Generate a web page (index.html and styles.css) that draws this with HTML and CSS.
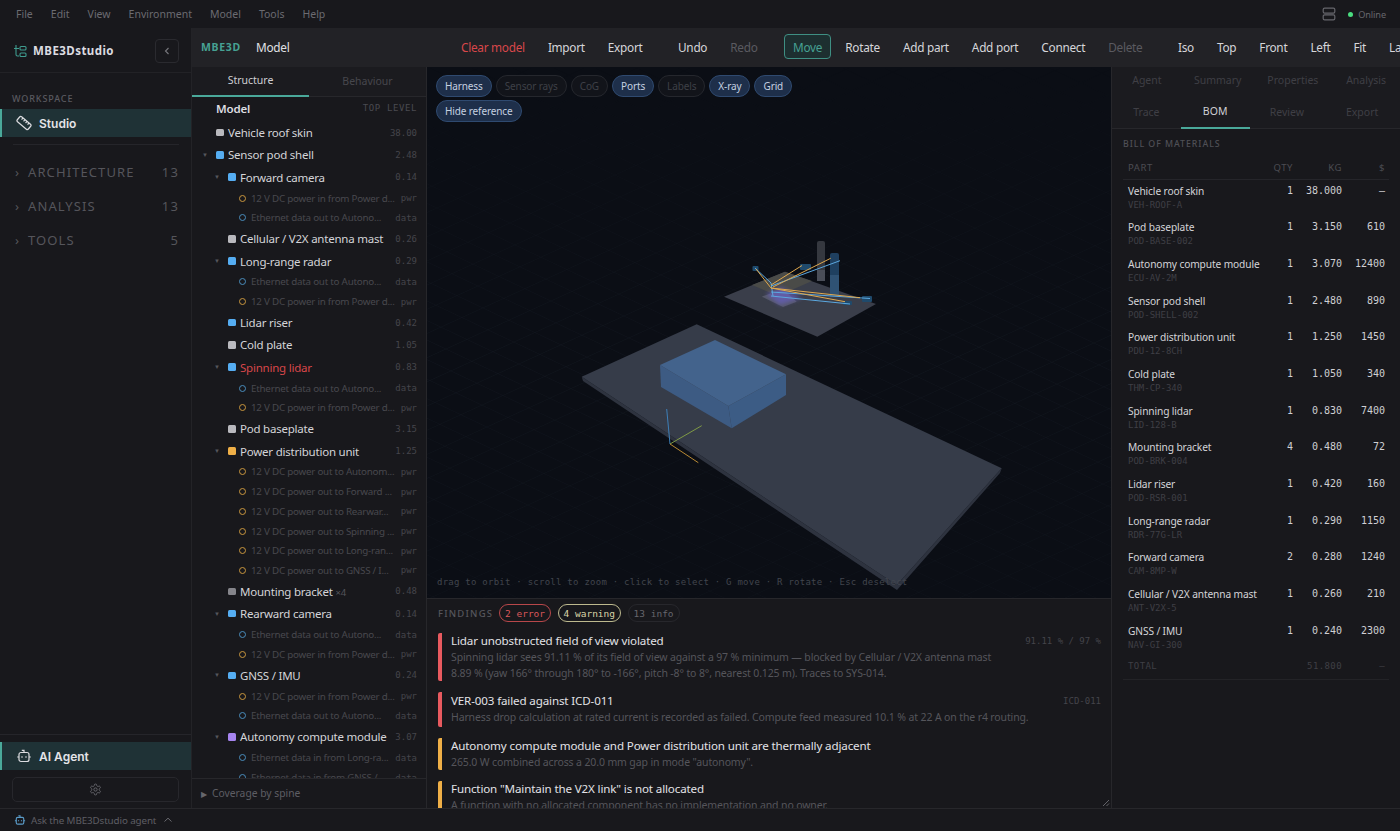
FILE: index.html
```html
<!DOCTYPE html>
<html lang="en">
<head>
<meta charset="utf-8">
<title>MBE3Dstudio</title>
<link rel="stylesheet" href="styles.css">
</head>
<body>
<div class="app">
  <header class="menubar">
    <nav class="menus"><span>File</span><span>Edit</span><span>View</span><span>Environment</span><span>Model</span><span>Tools</span><span>Help</span></nav>
    <svg class="server" viewBox="0 0 14 14" width="14" height="14"><rect x="1.2" y="1.2" width="11.6" height="5" rx="1.4"/><rect x="1.2" y="7.8" width="11.6" height="5" rx="1.4"/></svg>
    <span class="online"><i></i>Online</span>
  </header>
  <div class="body">
    <aside class="sidebar">
      <div class="brand">
        <svg class="logo" viewBox="0 0 14 14" width="14" height="14"><path d="M3 1v9.5q0 1.5 1.5 1.5H6M3 4.5h3"/><rect x="7" y="2.5" width="6" height="3.5" rx="1"/><rect x="7" y="9" width="6" height="3.5" rx="1"/><path d="M1 4.5h2"/></svg>
        <strong>MBE3Dstudio</strong>
        <button class="collapse"><svg viewBox="0 0 10 10" width="10" height="10"><path d="M6.5 2 3.5 5l3 3"/></svg></button>
      </div>
      <div class="ws-label">WORKSPACE</div>
      <div class="nav-active">
        <svg viewBox="0 0 16 16" width="16" height="16"><g transform="rotate(40 8 8)"><rect x="0.8" y="4.8" width="14.4" height="6.4" rx="1.4"/><path d="M4 4.8v2.2M6.6 4.8v2.2M9.2 4.8v2.2M11.8 4.8v2.2"/></g></svg>
        <span>Studio</span>
      </div>
      <div class="side-rule"></div>
      <div class="nav-group"><span class="chev">›</span><span class="g-name">ARCHITECTURE</span><span class="g-num">13</span></div>
      <div class="nav-group"><span class="chev">›</span><span class="g-name">ANALYSIS</span><span class="g-num">13</span></div>
      <div class="nav-group"><span class="chev">›</span><span class="g-name">TOOLS</span><span class="g-num">5</span></div>
      <div class="side-bottom">
        <div class="nav-active">
          <svg viewBox="0 0 16 16" width="16" height="16"><path d="M8 4.5V2.4H5.8"/><rect x="3" y="4.5" width="10" height="9" rx="2"/><path d="M1.2 9h1.8M13 9h1.8M6 8.2v1.6M10 8.2v1.6"/></svg>
          <span>AI Agent</span>
        </div>
        <button class="settings"><svg viewBox="0 0 24 24" width="13" height="13"><path d="M12.2 2h-.4a2 2 0 0 0-2 2v.2a2 2 0 0 1-1 1.7l-.4.3a2 2 0 0 1-2 0l-.2-.1a2 2 0 0 0-2.7.7l-.2.4a2 2 0 0 0 .7 2.7l.2.1a2 2 0 0 1 1 1.7v.5a2 2 0 0 1-1 1.8l-.2.1a2 2 0 0 0-.7 2.7l.2.4a2 2 0 0 0 2.7.7l.2-.1a2 2 0 0 1 2 0l.4.3a2 2 0 0 1 1 1.7v.2a2 2 0 0 0 2 2h.4a2 2 0 0 0 2-2v-.2a2 2 0 0 1 1-1.7l.4-.3a2 2 0 0 1 2 0l.2.1a2 2 0 0 0 2.7-.7l.2-.4a2 2 0 0 0-.7-2.7l-.2-.1a2 2 0 0 1-1-1.8v-.5a2 2 0 0 1 1-1.7l.2-.1a2 2 0 0 0 .7-2.7l-.2-.4a2 2 0 0 0-2.7-.7l-.2.1a2 2 0 0 1-2 0l-.4-.3a2 2 0 0 1-1-1.7V4a2 2 0 0 0-2-2z"/><circle cx="12" cy="12" r="3"/></svg></button>
      </div>
    </aside>
    <main class="workspace">
      <div class="toolbar">
        <span class="tb-brand">MBE3D</span>
        <span class="tb-title">Model</span>
        <div class="tb-group first">
          <button class="tb danger">Clear model</button><button class="tb">Import</button><button class="tb">Export</button>
        </div>
        <div class="tb-group">
          <button class="tb">Undo</button><button class="tb off">Redo</button>
        </div>
        <div class="tb-group">
          <button class="tb on">Move</button><button class="tb">Rotate</button><button class="tb">Add part</button><button class="tb">Add port</button><button class="tb">Connect</button><button class="tb off">Delete</button>
        </div>
        <div class="tb-group">
          <button class="tb">Iso</button><button class="tb">Top</button><button class="tb">Front</button><button class="tb">Left</button><button class="tb">Fit</button><button class="tb">Layout</button>
        </div>
      </div>
      <div class="panes">
        <section class="tree-pane">
          <div class="tree-tabs"><span class="active">Structure</span><span>Behaviour</span></div>
          <div class="tree">
            <div class="tree-head"><b>Model</b><em>TOP LEVEL</em></div>
            <div class="row l0"><i class="sq gray"></i><span class="nm">Vehicle roof skin</span><em>38.00</em></div>
            <div class="row l0 open"><i class="sq blue"></i><span class="nm">Sensor pod shell</span><em>2.48</em></div>
            <div class="row l1 open"><i class="sq blue"></i><span class="nm">Forward camera</span><em>0.14</em></div>
            <div class="port"><i class="ring pw"></i><span class="pn">12 V DC power in from Power d...</span><em>pwr</em></div>
            <div class="port"><i class="ring dt"></i><span class="pn">Ethernet data out to Autono...</span><em>data</em></div>
            <div class="row l1"><i class="sq gray"></i><span class="nm">Cellular / V2X antenna mast</span><em>0.26</em></div>
            <div class="row l1 open"><i class="sq blue"></i><span class="nm">Long-range radar</span><em>0.29</em></div>
            <div class="port"><i class="ring dt"></i><span class="pn">Ethernet data out to Autono...</span><em>data</em></div>
            <div class="port"><i class="ring pw"></i><span class="pn">12 V DC power in from Power d...</span><em>pwr</em></div>
            <div class="row l1"><i class="sq blue"></i><span class="nm">Lidar riser</span><em>0.42</em></div>
            <div class="row l1"><i class="sq gray"></i><span class="nm">Cold plate</span><em>1.05</em></div>
            <div class="row l1 open"><i class="sq blue"></i><span class="nm err">Spinning lidar</span><em>0.83</em></div>
            <div class="port"><i class="ring dt"></i><span class="pn">Ethernet data out to Autono...</span><em>data</em></div>
            <div class="port"><i class="ring pw"></i><span class="pn">12 V DC power in from Power d...</span><em>pwr</em></div>
            <div class="row l1"><i class="sq gray"></i><span class="nm">Pod baseplate</span><em>3.15</em></div>
            <div class="row l1 open"><i class="sq amber"></i><span class="nm">Power distribution unit</span><em>1.25</em></div>
            <div class="port"><i class="ring pw"></i><span class="pn">12 V DC power out to Autonom...</span><em>pwr</em></div>
            <div class="port"><i class="ring pw"></i><span class="pn">12 V DC power out to Forward ...</span><em>pwr</em></div>
            <div class="port"><i class="ring pw"></i><span class="pn">12 V DC power out to Rearwar...</span><em>pwr</em></div>
            <div class="port"><i class="ring pw"></i><span class="pn">12 V DC power out to Spinning ...</span><em>pwr</em></div>
            <div class="port"><i class="ring pw"></i><span class="pn">12 V DC power out to Long-ran...</span><em>pwr</em></div>
            <div class="port"><i class="ring pw"></i><span class="pn">12 V DC power out to GNSS / I...</span><em>pwr</em></div>
            <div class="row l1"><i class="sq dim"></i><span class="nm">Mounting bracket <small>×4</small></span><em>0.48</em></div>
            <div class="row l1 open"><i class="sq blue"></i><span class="nm">Rearward camera</span><em>0.14</em></div>
            <div class="port"><i class="ring dt"></i><span class="pn">Ethernet data out to Autono...</span><em>data</em></div>
            <div class="port"><i class="ring pw"></i><span class="pn">12 V DC power in from Power d...</span><em>pwr</em></div>
            <div class="row l1 open"><i class="sq blue"></i><span class="nm">GNSS / IMU</span><em>0.24</em></div>
            <div class="port"><i class="ring pw"></i><span class="pn">12 V DC power in from Power d...</span><em>pwr</em></div>
            <div class="port"><i class="ring dt"></i><span class="pn">Ethernet data out to Autono...</span><em>data</em></div>
            <div class="row l1 open"><i class="sq purple"></i><span class="nm">Autonomy compute module</span><em>3.07</em></div>
            <div class="port"><i class="ring dt"></i><span class="pn">Ethernet data in from Long-ra...</span><em>data</em></div>
            <div class="port"><i class="ring dt"></i><span class="pn">Ethernet data in from GNSS /...</span><em>data</em></div>
          </div>
          <div class="coverage"><span class="tri">▶</span>Coverage by spine</div>
        </section>
        <section class="center">
          <div class="viewport">
            <svg class="scene" viewBox="427 67 684 531" width="684" height="531">
              <defs>
                <pattern id="gridlines" width="1" height="1" patternUnits="userSpaceOnUse" patternTransform="matrix(21 -9.6 26 12.3 427 67)">
                  <path d="M0 0H1M0 0V1" class="gridpath"/>
                </pattern>
                <linearGradient id="gridfade" x1="0" y1="0" x2="0" y2="1">
                  <stop offset="0" stop-color="#fff" stop-opacity="0"/>
                  <stop offset=".18" stop-color="#fff" stop-opacity=".45"/>
                  <stop offset=".55" stop-color="#fff" stop-opacity="1"/>
                  <stop offset="1" stop-color="#fff" stop-opacity=".6"/>
                </linearGradient>
                <mask id="gridmask"><rect x="427" y="67" width="684" height="531" fill="url(#gridfade)"/></mask>
                <filter id="soft" x="-30%" y="-30%" width="160%" height="160%"><feGaussianBlur stdDeviation="2"/></filter>
              </defs>
              <rect x="427" y="67" width="684" height="531" fill="url(#gridlines)" mask="url(#gridmask)"/>
              <polygon class="slab-side" points="581.7,376.7 583,381 897,590 1000,473 1001.7,468.3 896.7,585"/>
              <polygon class="slab-top" points="581.7,376.7 696.7,324.3 1001.7,468.3 896.7,585"/>
              <polygon class="box-left" points="660,365 728.3,406 731.7,428.3 661,387"/>
              <polygon class="box-right" points="728.3,406 786,374.3 786,395 731.7,428.3"/>
              <polygon class="box-top" points="660,365 715,340 786,374.3 728.3,406"/>
              <g class="axes">
                <line x1="670" y1="444" x2="666.7" y2="409" stroke="#3d7fb8"/>
                <line x1="670" y1="444" x2="701.7" y2="425.7" stroke="#7f9a45"/>
                <line x1="670" y1="444" x2="698.3" y2="462.7" stroke="#b98a34"/>
              </g>
              <rect class="riser" x="817" y="241" width="8" height="40" rx="2"/>
              <rect class="blue-col" x="830" y="253" width="9" height="40" rx="2"/>
              <polygon class="pod-plate" points="724,296.7 785,271.7 876,304 817.3,336.7"/>
              <rect class="riser-over" x="817" y="270" width="8" height="11"/>
              <rect class="blue-over" x="830" y="275" width="9" height="22"/>
              <polygon class="pod-tan" points="752,285 785,271.8 812,281 778,296"/>
              <polygon class="pod-sub" points="761.7,296.7 783,289 796.7,301.7 783,307"/>
              <polygon class="glow" points="766,294 781,287 802,298 780,305" filter="url(#soft)"/>
              <g class="nodes">
                <rect x="752.5" y="266" width="6" height="5" rx="1"/>
                <rect x="800" y="264" width="11" height="6" rx="1"/>
                <rect x="862" y="296" width="10" height="6" rx="1"/>
                <rect x="843" y="301" width="9" height="4" rx="1"/>
              </g>
              <g class="wires-blue">
                <line x1="771" y1="283" x2="755" y2="268"/>
                <line x1="771" y1="286" x2="840" y2="260.7"/>
                <line x1="771" y1="292" x2="870" y2="298.5"/>
                <line x1="771" y1="296" x2="850" y2="304"/>
                <line x1="771" y1="283" x2="773" y2="296"/>
              </g>
              <g class="wires-amber">
                <line x1="771" y1="288" x2="756" y2="269"/>
                <line x1="771" y1="285" x2="802" y2="265.5"/>
                <line x1="773" y1="287" x2="830.7" y2="258.3"/>
                <line x1="771" y1="288" x2="860" y2="297.7"/>
                <line x1="771" y1="288" x2="845" y2="301.7"/>
              </g>
            </svg>
            <div class="chips">
              <span class="chip on">Harness</span><span class="chip">Sensor rays</span><span class="chip">CoG</span><span class="chip on">Ports</span><span class="chip">Labels</span><span class="chip on">X-ray</span><span class="chip on">Grid</span><span class="chip on">Hide reference</span>
            </div>
            <div class="hint">drag to orbit · scroll to zoom · click to select · G move · R rotate · Esc deselect</div>
          </div>
          <div class="findings">
            <div class="f-head">
              <span class="f-label">FINDINGS</span>
              <span class="badge b-err">2 error</span><span class="badge b-warn">4 warning</span><span class="badge b-info">13 info</span>
            </div>
            <article class="f f-e">
              <div class="f-text"><h4>Lidar unobstructed field of view violated</h4><p>Spinning lidar sees 91.11 % of its field of view against a 97 % minimum — blocked by Cellular / V2X antenna mast<br>8.89 % (yaw 166° through 180° to -166°, pitch -8° to 8°, nearest 0.125 m). Traces to SYS-014.</p></div>
              <code>91.11 % / 97 %</code>
            </article>
            <article class="f f-e f-tall">
              <div class="f-text"><h4>VER-003 failed against ICD-011</h4><p>Harness drop calculation at rated current is recorded as failed. Compute feed measured 10.1 % at 22 A on the r4 routing.</p></div>
              <code>ICD-011</code>
            </article>
            <article class="f f-w">
              <div class="f-text"><h4>Autonomy compute module and Power distribution unit are thermally adjacent</h4><p>265.0 W combined across a 20.0 mm gap in mode "autonomy".</p></div>
            </article>
            <article class="f f-w">
              <div class="f-text"><h4>Function "Maintain the V2X link" is not allocated</h4><p>A function with no allocated component has no implementation and no owner.</p></div>
            </article>
            <svg class="grip" viewBox="0 0 8 8" width="8" height="8"><path d="M1 7 7 1M4.5 7 7 4.5"/></svg>
          </div>
        </section>
        <section class="right-pane">
          <div class="r-tabs">
            <div class="r-row"><span class="w70">Agent</span><span class="w72">Summary</span><span class="w79">Properties</span><span class="w68">Analysis</span></div>
            <div class="r-row r-second"><span class="w69">Trace</span><span class="w69 active">BOM</span><span class="w75">Review</span><span class="w76">Export</span></div>
          </div>
          <div class="bom">
            <div class="bom-title">BILL OF MATERIALS</div>
            <div class="b-head"><span>PART</span><span>QTY</span><span>KG</span><span>$</span></div>
            <div class="b-row"><div><b>Vehicle roof skin</b><u>VEH-ROOF-A</u></div><span>1</span><span>38.000</span><span>—</span></div>
            <div class="b-row"><div><b>Pod baseplate</b><u>POD-BASE-002</u></div><span>1</span><span>3.150</span><span>610</span></div>
            <div class="b-row"><div><b>Autonomy compute module</b><u>ECU-AV-2M</u></div><span>1</span><span>3.070</span><span>12400</span></div>
            <div class="b-row"><div><b>Sensor pod shell</b><u>POD-SHELL-002</u></div><span>1</span><span>2.480</span><span>890</span></div>
            <div class="b-row"><div><b>Power distribution unit</b><u>PDU-12-8CH</u></div><span>1</span><span>1.250</span><span>1450</span></div>
            <div class="b-row"><div><b>Cold plate</b><u>THM-CP-340</u></div><span>1</span><span>1.050</span><span>340</span></div>
            <div class="b-row"><div><b>Spinning lidar</b><u>LID-128-B</u></div><span>1</span><span>0.830</span><span>7400</span></div>
            <div class="b-row"><div><b>Mounting bracket</b><u>POD-BRK-004</u></div><span>4</span><span>0.480</span><span>72</span></div>
            <div class="b-row"><div><b>Lidar riser</b><u>POD-RSR-001</u></div><span>1</span><span>0.420</span><span>160</span></div>
            <div class="b-row"><div><b>Long-range radar</b><u>RDR-77G-LR</u></div><span>1</span><span>0.290</span><span>1150</span></div>
            <div class="b-row"><div><b>Forward camera</b><u>CAM-8MP-W</u></div><span>2</span><span>0.280</span><span>1240</span></div>
            <div class="b-row"><div><b>Cellular / V2X antenna mast</b><u>ANT-V2X-5</u></div><span>1</span><span>0.260</span><span>210</span></div>
            <div class="b-row"><div><b>GNSS / IMU</b><u>NAV-GI-300</u></div><span>1</span><span>0.240</span><span>2300</span></div>
            <div class="b-total"><span>TOTAL</span><span></span><span>51.800</span><span>—</span></div>
          </div>
        </section>
      </div>
    </main>
  </div>
  <footer class="statusbar">
    <svg class="st-bot" viewBox="0 0 16 16" width="12" height="12"><path d="M8 4.5V2.4H5.8"/><rect x="3" y="4.5" width="10" height="9" rx="2"/><path d="M1.2 9h1.8M13 9h1.8M6 8.2v1.6M10 8.2v1.6"/></svg>
    <span>Ask the MBE3Dstudio agent</span>
    <svg class="st-up" viewBox="0 0 10 10" width="10" height="10"><path d="M1.5 6.5 5 3.2l3.5 3.3"/></svg>
  </footer>
</div>
</body>
</html>
```
FILE: styles.css
```css
* { box-sizing: border-box; }
html, body { margin: 0; height: 100%; overflow: hidden; }
body { background: #18181c; color: #d8d8dc; font-family: "Noto Sans", sans-serif; }
button { font: inherit; background: none; border: 0; color: inherit; padding: 0; }
.app { width: 1400px; height: 831px; display: flex; flex-direction: column; overflow: hidden; }

/* menu bar */
.menubar { height: 28px; flex: none; display: flex; align-items: center; padding-left: 16px; padding-right: 14px; background: #18181c; }
.menus { display: flex; gap: 18px; font-size: 10.5px; color: #6b6b71; flex: 1; }
.server { fill: none; stroke: #66666c; stroke-width: 1.2; margin-right: 12px; }
.online { display: flex; align-items: center; gap: 5px; font-size: 9.2px; letter-spacing: -.1px; color: #66666c; }
.online i { width: 5px; height: 5px; border-radius: 50%; background: #4ade80; }

.body { flex: 1; min-height: 0; display: flex; }

/* sidebar */
.sidebar { width: 192px; flex: none; display: flex; flex-direction: column; background: #18181c; border-right: 1px solid #232327; }
.brand { height: 45px; flex: none; display: flex; align-items: center; padding: 1px 12px 0 13px; border-bottom: 1px solid #222226; }
.logo { fill: none; stroke: #3f9c8f; stroke-width: 1.1; margin-right: 6px; }
.brand strong { flex: 1; font-size: 11.5px; font-weight: 700; letter-spacing: .45px; color: #dcdce0; }
.collapse { width: 24px; height: 24px; border: 1px solid #2a2a2f; border-radius: 4px; display: flex; align-items: center; justify-content: center; }
.collapse svg { fill: none; stroke: #77777d; stroke-width: 1.1; }
.ws-label { margin: 19px 0 0 12px; height: 17px; font-size: 9px; letter-spacing: .9px; color: #5a5a60; font-weight: 500; }
.nav-active { height: 28px; flex: none; display: flex; align-items: center; gap: 7px; padding-left: 14px; background: #1f3236; border-left: 2.5px solid #4aa99a; font-family: "Inter", sans-serif; font-weight: 600; font-size: 12px; color: #e4e4e8; }
.nav-active svg { fill: none; stroke: #dcdce0; stroke-width: 1.2; }
.side-rule { height: 1px; background: #25252a; margin: 7px 12px 10px 13px; flex: none; }
.nav-group { height: 34.2px; flex: none; display: flex; align-items: center; padding: 0 13px 0 15px; color: #55555b; font-size: 13px; letter-spacing: 1.1px; }
.chev { width: 13px; font-size: 13px; letter-spacing: 0; }
.g-name { flex: 1; }
.g-num { letter-spacing: 1.5px; margin-right: -1.5px; }
.side-bottom { margin-top: auto; border-top: 1px solid #25252a; padding-top: 7px; height: 74px; flex: none; }
.settings { display: flex; align-items: center; justify-content: center; width: 167px; height: 25px; margin: 7px 0 0 12px; border: 1px solid #27272c; border-radius: 5px; }
.settings svg { fill: none; stroke: #66666c; stroke-width: 1.8; }

/* toolbar */
.workspace { flex: 1; min-width: 0; display: flex; flex-direction: column; }
.toolbar { height: 39px; flex: none; display: flex; align-items: center; padding: 0 0 2px 9px; background: #222226; overflow: hidden; white-space: nowrap; }
.tb-brand { font-size: 10.5px; font-weight: 700; letter-spacing: .7px; color: #46a193; width: 55px; flex: none; }
.tb-title { font-size: 11.8px; letter-spacing: -.24px; color: #e0e0e4; width: 196px; flex: none; }
.tb-group { display: flex; gap: 5px; margin-left: 17.5px; flex: none; align-items: center; }
.tb-group.first { margin-left: 0; }
.tb { height: 25px; padding: 0 8px; border: 1px solid transparent; border-radius: 4px; font-size: 11.8px; letter-spacing: -.27px; color: #d6d6da; flex: none; }
.tb.danger { color: #d9474a; }
.tb.off { color: #5a5a60; }
.tb.on { color: #46a193; border-color: #3f8f83; background: #1d2f30; }

.panes { flex: 1; min-height: 0; display: flex; }

/* tree */
.tree-pane { width: 235px; flex: none; display: flex; flex-direction: column; background: #18181c; border-right: 1px solid #27272b; }
.tree-tabs { height: 30px; flex: none; display: flex; border-bottom: 1px solid #27272b; font-size: 10.5px; color: #47474d; background: #1b1b1f; }
.tree-tabs span { flex: 1; display: flex; align-items: center; justify-content: center; height: 30px; padding-bottom: 3px; }
.tree-tabs .active { color: #cfcfd4; border-bottom: 2px solid #4aa99a; }
.tree { flex: 1; min-height: 0; overflow: hidden; }
.tree-head { height: 24.5px; display: flex; align-items: center; padding: 0 9px 2px 24px; }
.tree-head b { flex: 1; font-size: 11.5px; letter-spacing: -.15px; font-weight: 600; color: #dedee2; }
.tree-head em { font: 9px "DejaVu Sans Mono", monospace; letter-spacing: .6px; color: #4a4a50; }
.row { height: 22.25px; display: flex; align-items: center; padding-right: 9px; position: relative; }
.row.l0 { padding-left: 24px; }
.row.l1 { padding-left: 36px; }
.row.open::before { content: "▼"; position: absolute; top: 7px; font-size: 6px; color: #56565c; }
.row.l0.open::before { left: 10px; }
.row.l1.open::before { left: 22px; }
.sq { width: 7.5px; height: 7.5px; border-radius: 1.5px; margin-right: 4.5px; flex: none; }
.gray { background: #b9b9be; }
.dim { background: #85858b; }
.blue { background: #55adf2; }
.amber { background: #efaf47; }
.purple { background: #a684ef; }
.nm { flex: 1; font-size: 11.5px; letter-spacing: -.22px; color: #d4d4d8; white-space: nowrap; }
.nm small { font-size: 9.5px; color: #55555b; }
.nm.err { color: #d9474a; }
.row em, .port em { font: 9px "DejaVu Sans Mono", monospace; color: #45454b; flex: none; }
.port { height: 19.7px; display: flex; align-items: center; padding: 0 9px 0 47px; }
.ring { width: 7px; height: 7px; border-radius: 50%; border: 1.2px solid; flex: none; margin-right: 5px; }
.pw { border-color: #c9963e; }
.dt { border-color: #4a8dbd; }
.pn { flex: 1; font-size: 9.8px; letter-spacing: -.23px; color: #48484e; white-space: nowrap; overflow: hidden; }
.coverage { height: 30px; flex: none; display: flex; align-items: center; padding: 0 0 1px 9px; font-size: 10.3px; color: #5e5e64; border-top: 1px solid #27272b; }
.tri { font-size: 8px; margin-right: 5px; color: #66666c; }

/* centre */
.center { width: 684px; flex: none; display: flex; flex-direction: column; }
.viewport { height: 531px; flex: none; position: relative; background: #0b0e15; overflow: hidden; }
.scene { display: block; }
.gridpath { fill: none; stroke: #141922; stroke-width: .035; }
.slab-top { fill: #363c49; }
.slab-side { fill: #2e333f; }
.box-top { fill: #43638c; }
.box-left { fill: #3d5b83; }
.box-right { fill: #3c5c85; }
.axes line { stroke-width: 1; }
.riser { fill: #35383f; }
.blue-col { fill: #1f4060; }
.pod-plate { fill: #3a3e4a; }
.riser-over { fill: #4a4e58; }
.blue-over { fill: #2f5274; }
.pod-tan { fill: #4a4b48; }
.pod-sub { fill: #555867; }
.glow { fill: #6a60d0; opacity: .6; }
.nodes rect { fill: #1f4a6c; }
.wires-blue line { stroke: #5ba8e0; stroke-width: 1; }
.wires-amber line { stroke: #e0a94e; stroke-width: 1; }
.chips { position: absolute; left: 9px; top: 8px; width: 370px; display: flex; flex-wrap: wrap; gap: 3px 4px; }
.chip { height: 22px; padding: 0 8px 1px; display: flex; align-items: center; border: 1px solid #25272d; border-radius: 11px; font-size: 10px; letter-spacing: -.12px; color: #3e4047; background: #12141a; }
.chip.on { color: #c5d0e0; background: #1e2f4a; border-color: #2f4a70; }
.hint { position: absolute; left: 10px; bottom: 11px; font: 9px "DejaVu Sans Mono", monospace; letter-spacing: .25px; color: #41454d; }

/* findings */
.findings { flex: 1; min-height: 0; overflow: hidden; position: relative; background: #18181c; border-top: 1px solid #27272b; padding: 0 10px 0 11px; }
.f-head { height: 34px; display: flex; align-items: center; gap: 6.5px; padding-bottom: 6px; }
.f-label { font-family: "Noto Sans", sans-serif; font-weight: 500; font-size: 9.5px; letter-spacing: 1.2px; color: #55555b; width: 54.5px; }
.badge { height: 18px; display: flex; align-items: center; padding: 0 5px; border: 1px solid; border-radius: 9px; font: 9.5px "DejaVu Sans Mono", monospace; }
.b-err { color: #d9575a; border-color: #b8474a; }
.b-warn { color: #d8d4a8; border-color: #bdb98e; }
.b-info { color: #66666c; border-color: #27272c; }
.f { display: flex; border-left: 4px solid; border-radius: 2px; padding-left: 9px; margin-bottom: 11px; min-height: 32px; }
.f-tall { height: 35px; padding-top: 1px; }
.f-e { border-color: #e85a5f; }
.f-w { border-color: #efaf47; }
.f-text { flex: 1; }
.f h4 { margin: 0; height: 16px; line-height: 16px; font-size: 11.6px; letter-spacing: -.14px; font-weight: 400; color: #e2e2e6; }
.f p { margin: 0; font-size: 10.5px; letter-spacing: -.13px; line-height: 16px; color: #55555b; }
.f code { font: 9px "DejaVu Sans Mono", monospace; color: #44444a; line-height: 16px; }
.grip { position: absolute; right: 1px; bottom: 1px; fill: none; stroke: #77777d; stroke-width: .8; }

/* right */
.right-pane { flex: 1; min-width: 0; display: flex; flex-direction: column; background: #18181c; border-left: 1px solid #27272b; }
.r-tabs { height: 62px; flex: none; background: #1b1b1f; border-bottom: 1px solid #27272b; font-size: 10.5px; color: #3f3f45; }
.r-row { height: 31px; display: flex; }
.r-row span { display: flex; align-items: center; justify-content: center; padding-bottom: 6px; }
.r-second span { padding-bottom: 4px; }
.r-row .active { color: #cfcfd4; border-bottom: 2px solid #4aa99a; }
.w68 { width: 68px; } .w69 { width: 69px; } .w70 { width: 70px; } .w72 { width: 72px; }
.w75 { width: 75px; } .w76 { width: 76px; } .w79 { width: 79px; }
.bom { padding: 0 11px 0 11px; }
.bom-title { height: 27px; padding-top: 9px; font-size: 8.8px; font-weight: 500; letter-spacing: .95px; color: #4f4f55; }
.b-head, .b-row, .b-total { display: grid; grid-template-columns: 145px 20px 49px 43px; padding-left: 5px; padding-right: 3px; }
.b-head { height: 24px; align-items: center; border-bottom: 1px solid #25252a; font-size: 9.5px; letter-spacing: .6px; color: #4c4c52; }
.b-head span:not(:first-child), .b-row > span, .b-total span:not(:first-child) { text-align: right; }
.b-row { height: 36.7px; padding-top: 2.5px; font: 10px "DejaVu Sans Mono", monospace; color: #cfcfd3; line-height: 16px; }
.b-row b { display: block; white-space: nowrap; font-family: "Noto Sans", sans-serif; font-weight: 400; font-size: 10.2px; letter-spacing: -.12px; line-height: 16px; color: #d4d4d8; }
.b-row u { display: block; text-decoration: none; font-size: 9px; line-height: 12px; color: #3f3f45; }
.b-total { height: 26px; margin-top: -3px; align-items: center; font: 9px "DejaVu Sans Mono", monospace; letter-spacing: .4px; color: #3f3f45; border-bottom: 1px solid #232327; }

/* status */
.statusbar { height: 23px; flex: none; display: flex; align-items: center; padding-left: 14px; background: #18181c; border-top: 1px solid #27272b; font-size: 9.8px; letter-spacing: -.1px; color: #5e5e64; }
.st-bot { fill: none; stroke: #5a9bc8; stroke-width: 1.5; margin-right: 5px; }
.st-up { fill: none; stroke: #6a6a70; stroke-width: 1; margin-left: 7px; }
```
